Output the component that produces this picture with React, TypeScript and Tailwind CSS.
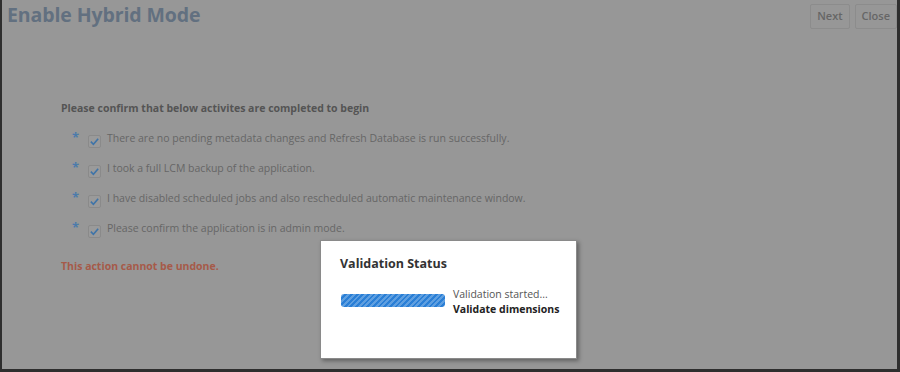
import { useState } from 'react';

const items = [
  'There are no pending metadata changes and Refresh Database is run successfully.',
  'I took a full LCM backup of the application.',
  'I have disabled scheduled jobs and also rescheduled automatic maintenance window.',
  'Please confirm the application is in admin mode.',
];

function Check() {
  return (
    <span className="flex h-[13px] w-[13px] items-center justify-center rounded-[2px] border border-[#8a8a8a] bg-[#9a9a9a]">
      <svg viewBox="0 0 12 12" className="h-[11px] w-[11px]">
        <path d="M2 6.2 L4.8 9 L10 3" fill="none" stroke="#3f74a8" strokeWidth="1.8" />
      </svg>
    </span>
  );
}

export default function App() {
  const [checked] = useState(items.map(() => true));

  return (
    <div className="h-[372px] w-[900px] overflow-hidden bg-white" style={{ fontFamily: '"Open Sans", "Liberation Sans", sans-serif' }}>
      <div className="relative h-[372px] w-[900px] border-b-[3px] border-l-[2px] border-r-[3px] border-[#2e2e2e] bg-[#979797]">
        {/* Header */}
        <div className="flex items-start justify-between pl-[5px] pt-[2px]">
          <h1 className="text-[19.5px] font-bold leading-[26px] tracking-[-0.1px] text-[#627080]">Enable Hybrid Mode</h1>
          <div className="flex gap-[5px] pt-[2px]">
            <button className="h-[25px] rounded-[2px] border border-[#8c8c8c] px-[6px] text-[11px] font-semibold text-[#666]">Next</button>
            <button className="h-[25px] rounded-[2px] border border-[#8c8c8c] px-[6px] text-[11px] font-semibold text-[#666]">Close</button>
          </div>
        </div>

        {/* Body */}
        <div className="pl-[59px] pt-[72px]">
          <p className="text-[10.5px] font-bold leading-[15px] text-[#545454]">
            Please confirm that below activites are completed to begin
          </p>
          <div className="mt-[15px] flex flex-col gap-[14px] pl-[11px]">
            {items.map((t, i) => (
              <div key={i} className="flex h-[16px] items-center">
                <span className="w-[16px] self-start text-[13px] font-bold leading-[12px] text-[#4c7bab]">*</span>
                <span className="mt-[4px]">{checked[i] && <Check />}</span>
                <span className="ml-[6px] text-[10.5px] text-[#666]">{t}</span>
              </div>
            ))}
          </div>
          <p className="mt-[22px] text-[10.5px] font-bold text-[#a65a49]">This action cannot be undone.</p>
        </div>

        {/* Dialog */}
        <div className="absolute left-[318px] top-[240px] h-[119px] w-[257px] border border-[#8a8a8a] bg-white shadow-[2px_2px_4px_rgba(0,0,0,0.35)]">
          <div className="pl-[19px] pt-[14px] text-[12.5px] font-bold text-[#333]">Validation Status</div>
          <div className="mt-[13px] flex items-start pl-[20px]">
            <div
              className="mt-[7px] h-[13px] w-[104px] rounded-[3px] bg-[#2a7fd6]"
              style={{
                backgroundImage:
                  'repeating-linear-gradient(-45deg, rgba(255,255,255,0.25) 0 2px, transparent 2px 4px)',
              }}
            />
            <div className="ml-[8px] text-[10.5px] leading-[15px]">
              <div className="text-[#555]">Validation started...</div>
              <div className="font-bold text-[#222]">Validate dimensions</div>
            </div>
          </div>
        </div>
      </div>
    </div>
  );
}
